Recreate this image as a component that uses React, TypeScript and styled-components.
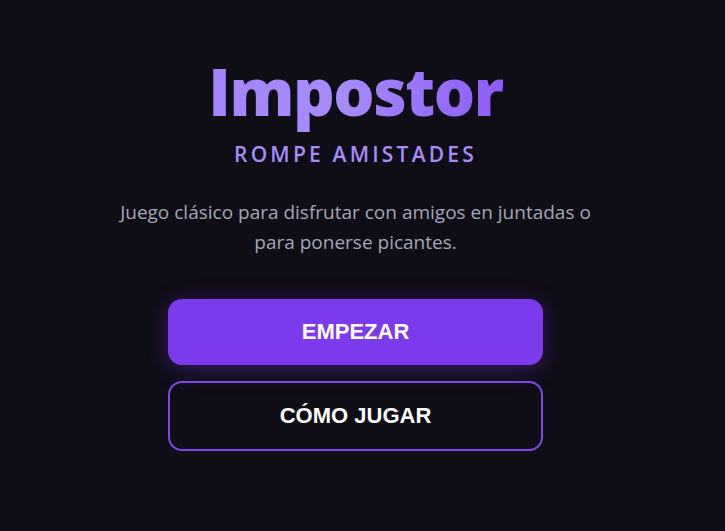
import React from "react";
import styled, { createGlobalStyle } from "styled-components";

const Global = createGlobalStyle`
  html, body { margin: 0; padding: 0; background: #0f0d16; }
  body { font-family: "Open Sans", "Noto Sans", sans-serif; }
`;

const Page = styled.main`
  min-height: 531px;
  box-sizing: border-box;
  padding: 49px 14px 0 0;
  display: flex;
  flex-direction: column;
  align-items: center;
  background: #0f0d16;
`;

const Title = styled.h1`
  margin: 0;
  font-family: "Open Sans", sans-serif;
  font-weight: 800;
  font-size: 65px;
  line-height: 84px;
  letter-spacing: -1.5px;
  background: linear-gradient(90deg, #a384fa 0%, #a78bfa 45%, #8b5cf6 100%);
  -webkit-background-clip: text;
  background-clip: text;
  color: transparent;
`;

const Subtitle = styled.h2`
  margin: 6px 0 0;
  font-family: "Open Sans", sans-serif;
  font-weight: 600;
  font-size: 21px;
  line-height: 30px;
  letter-spacing: 3.2px;
  color: #a78bfa;
`;

const Description = styled.p`
  margin: 28px 0 0;
  width: 500px;
  text-align: center;
  font-family: "Open Sans", sans-serif;
  font-size: 19px;
  line-height: 30px;
  color: #a3a6b8;
`;

const Actions = styled.div`
  margin-top: 42px;
  width: 375px;
  display: flex;
  flex-direction: column;
  gap: 16px;
`;

const Button = styled.button<{ $variant: "primary" | "outline" }>`
  height: ${(p) => (p.$variant === "primary" ? "66px" : "70px")};
  border-radius: 14px;
  font-family: "Liberation Sans", Arial, sans-serif;
  font-weight: 700;
  font-size: 22px;
  color: #ffffff;
  cursor: pointer;
  border: ${(p) => (p.$variant === "primary" ? "none" : "2px solid #7f45ea")};
  background: ${(p) => (p.$variant === "primary" ? "#7c3aed" : "transparent")};
  box-shadow: ${(p) =>
    p.$variant === "primary" ? "0 4px 22px rgba(124, 58, 237, 0.35)" : "none"};
`;

export default function App() {
  return (
    <>
      <Global />
      <Page>
        <Title>Impostor</Title>
        <Subtitle>ROMPE AMISTADES</Subtitle>
        <Description>
          Juego clásico para disfrutar con amigos en juntadas o para ponerse picantes.
        </Description>
        <Actions>
          <Button $variant="primary">EMPEZAR</Button>
          <Button $variant="outline">CÓMO JUGAR</Button>
        </Actions>
      </Page>
    </>
  );
}
